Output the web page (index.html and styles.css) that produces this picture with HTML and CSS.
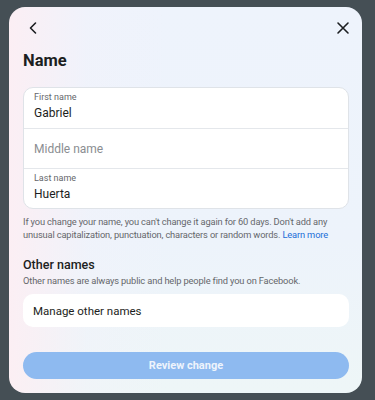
FILE: index.html
```html
<!DOCTYPE html>
<html>
<head>
<meta charset="utf-8">
<link rel="stylesheet" href="styles.css">
</head>
<body>
<div class="modal">
  <div class="header">
    <button class="icon-btn" aria-label="Back">
      <svg width="14" height="14" viewBox="0 0 14 14"><path d="M9.5 2 L4.5 7 L9.5 12" fill="none" stroke="#1c1e21" stroke-width="1.6" stroke-linecap="round" stroke-linejoin="round"/></svg>
    </button>
    <button class="icon-btn" aria-label="Close">
      <svg width="14" height="14" viewBox="0 0 14 14"><path d="M2 2 L12 12 M12 2 L2 12" fill="none" stroke="#1c1e21" stroke-width="1.6" stroke-linecap="round"/></svg>
    </button>
  </div>
  <h1 class="title">Name</h1>
  <div class="fields">
    <div class="field">
      <div class="label">First name</div>
      <div class="value">Gabriel</div>
    </div>
    <div class="field empty">
      <div class="placeholder">Middle name</div>
    </div>
    <div class="field">
      <div class="label">Last name</div>
      <div class="value">Huerta</div>
    </div>
  </div>
  <p class="help">If you change your name, you can't change it again for 60 days. Don't add any unusual capitalization, punctuation, characters or random words. <a class="link">Learn more</a></p>
  <h2 class="subtitle">Other names</h2>
  <p class="subhelp">Other names are always public and help people find you on Facebook.</p>
  <div class="manage">Manage other names</div>
  <div class="spacer"></div>
  <button class="review">Review change</button>
</div>
</body>
</html>
```
FILE: styles.css
```css
html, body {
  margin: 0;
  padding: 0;
}
body {
  width: 375px;
  height: 400px;
  background: #454f55;
  font-family: Roboto, "Noto Sans", sans-serif;
  overflow: hidden;
  padding-top: 7px;
  box-sizing: border-box;
}
.modal {
  margin-left: 9px;
  width: 353px;
  height: 386px;
  box-sizing: border-box;
  border-radius: 16px;
  background:
    linear-gradient(90deg, rgba(253,238,243,0.9) 0%, rgba(243,242,250,0.4) 22%, rgba(238,244,252,0) 45%),
    linear-gradient(180deg, #eef3fc 0%, #edf3fb 60%, #eef6f7 100%);
  padding: 0 13px 14px 14px;
  display: flex;
  flex-direction: column;
}
.header {
  height: 42px;
  flex: none;
  display: flex;
  justify-content: space-between;
  align-items: center;
  margin: 0 -6px 0 -2px;
}
.icon-btn {
  border: 0;
  background: none;
  padding: 0;
  width: 24px;
  height: 24px;
  display: flex;
  align-items: center;
  justify-content: center;
}
.title {
  margin: 0;
  font-size: 16.5px;
  font-weight: 700;
  color: #1c1e21;
  line-height: 24px;
  height: 24px;
}
.fields {
  margin-top: 14px;
  background: #fff;
  border: 1px solid #dfe3e8;
  border-radius: 10px;
  overflow: hidden;
}
.field {
  height: 40px;
  box-sizing: border-box;
  padding: 2px 10px 0 10px;
  border-top: 1px solid #e4e7eb;
}
.field:first-child { border-top: 0; }
.label {
  font-size: 9px;
  color: #65676b;
  line-height: 12px;
  margin-top: 1px;
}
.value {
  font-size: 12px;
  color: #1c1e21;
  font-weight: 400;
  line-height: 16px;
  margin-top: 2px;
}
.field.empty {
  display: flex;
  align-items: center;
  padding-top: 0;
}
.placeholder {
  font-size: 12px;
  color: #8a8d91;
  line-height: 16px;
}
.help {
  margin: 7px 0 0 0;
  font-size: 9.3px;
  letter-spacing: -0.15px;
  line-height: 12.5px;
  color: #65676b;
}
.link { color: #1b6ed8; }
.subtitle {
  margin: 16px 0 0 0;
  font-size: 12.5px;
  font-weight: 500;
  color: #1c1e21;
  line-height: 16px;
}
.subhelp {
  margin: 1px 0 0 0;
  font-size: 9.3px;
  letter-spacing: -0.15px;
  line-height: 13px;
  color: #65676b;
}
.manage {
  margin-top: 7px;
  flex: none;
  background: #fff;
  border-radius: 10px;
  height: 33px;
  display: flex;
  align-items: center;
  padding-left: 10px;
  font-size: 11.5px;
  font-weight: 400;
  color: #1c1e21;
}
.spacer { flex: 1; }
.review {
  height: 27px;
  flex: none;
  border: 0;
  border-radius: 14px;
  background: #8ebaf0;
  color: #eef4fc;
  font-family: inherit;
  font-size: 11px;
  font-weight: 700;
  width: 100%;
}
```
